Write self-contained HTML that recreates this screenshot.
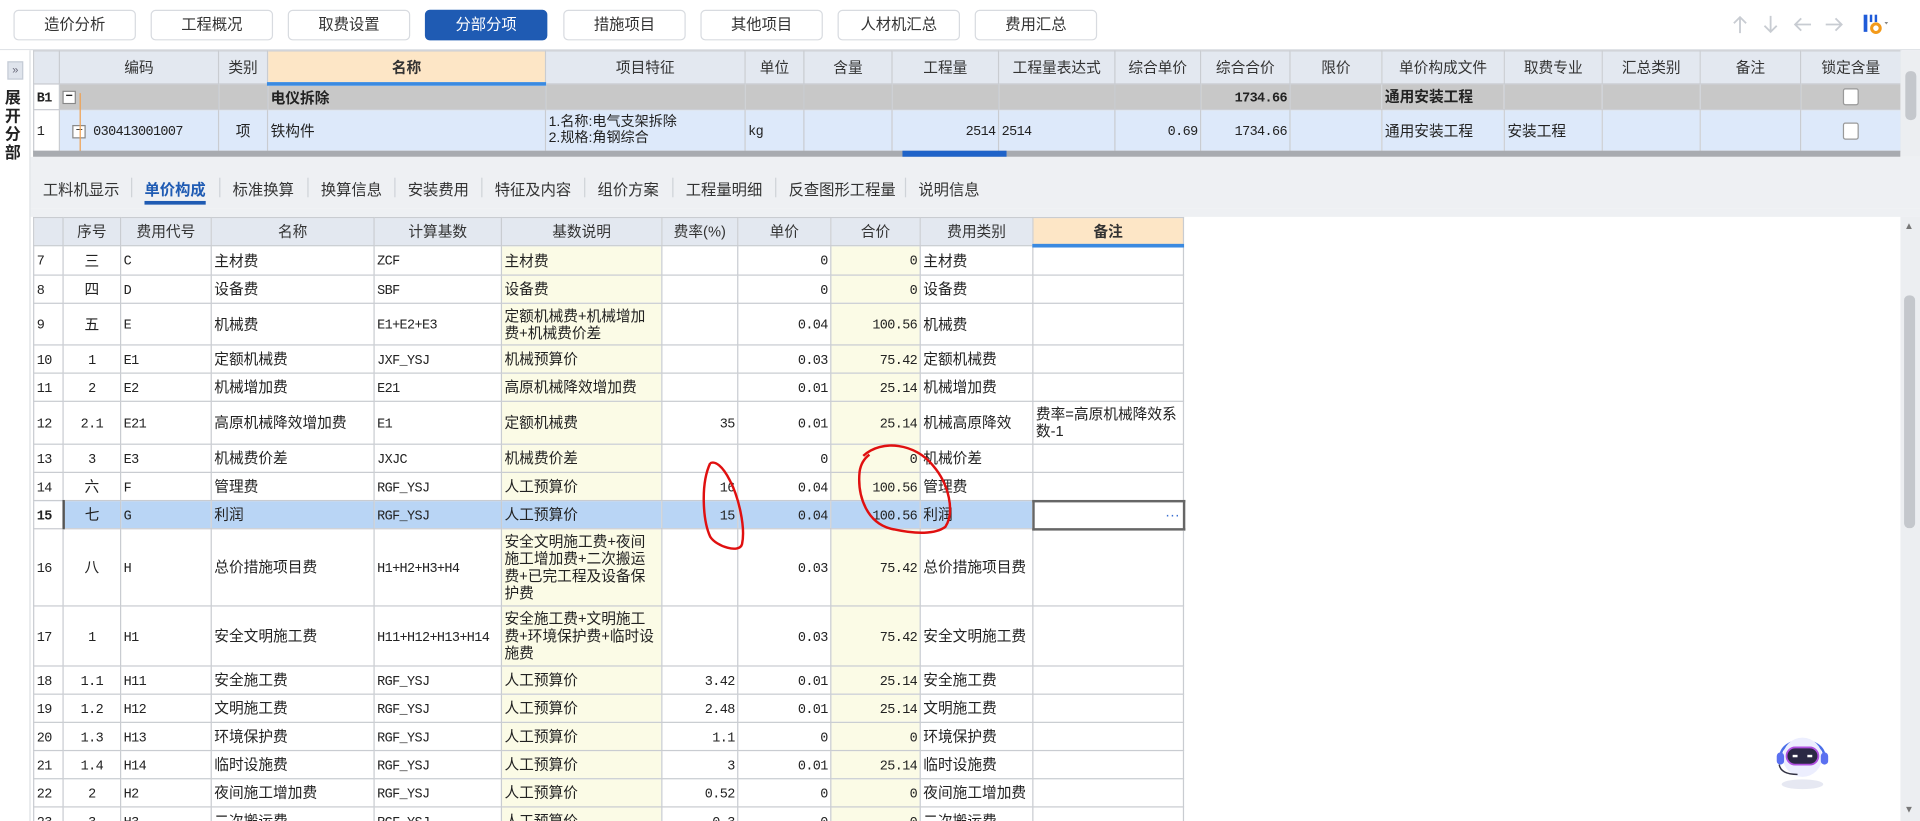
<!DOCTYPE html>
<html><head><meta charset="utf-8">
<style>
*{box-sizing:border-box;margin:0;padding:0}
html,body{width:1920px;height:821px;overflow:hidden;background:#fff}
#s{position:absolute;left:0;top:0;width:1568px;height:670px;overflow:hidden;transform:scale(1.22449,1.22537);transform-origin:0 0;font-family:"Liberation Sans","Noto Sans CJK SC",sans-serif;font-size:12px;color:#222;background:#fff}
.btn{position:absolute;top:8px;width:100px;height:25px;border:1px solid #d8dbe0;border-radius:4px;background:#fff;text-align:center;line-height:23px;font-size:12.5px;color:#333}
.btn.on{background:#1f5bb3;color:#fff;border-color:#1f5bb3}
table{border-collapse:collapse;table-layout:fixed;position:absolute}
td{border:1px solid #c9ccd1;padding:0 2px;overflow:hidden;white-space:nowrap;vertical-align:middle;line-height:14px}
.hd td{background:#e3e8f0;text-align:center;color:#333}
.r{text-align:right}.c{text-align:center}
.m{font-family:"Liberation Mono","Noto Sans CJK SC",monospace;font-size:11px;letter-spacing:-0.5px;padding-top:3px}
.y{background:#fbfbe6}
.w td.wr{white-space:normal;word-break:break-all;line-height:14px}
.cb{display:inline-block;width:13px;height:14px;border:1px solid #999;border-radius:2px;background:#fff;vertical-align:middle}
.mb{display:inline-block;width:11px;height:11px;border:1px solid #888;background:#fff;font-size:10px;line-height:8px;text-align:center;vertical-align:middle}
.tab{position:absolute;top:144px;font-size:12.5px;color:#333}
.sep{position:absolute;top:145px;width:1px;height:16px;background:#cfd3d8}
</style></head><body><div id="s">
<div class="btn" style="left:11px">造价分析</div>
<div class="btn" style="left:123px">工程概况</div>
<div class="btn" style="left:235px">取费设置</div>
<div class="btn on" style="left:347px">分部分项</div>
<div class="btn" style="left:460px">措施项目</div>
<div class="btn" style="left:572px">其他项目</div>
<div class="btn" style="left:684px">人材机汇总</div>
<div class="btn" style="left:796px">费用汇总</div>
<svg style="position:absolute;left:1412px;top:12px" width="95" height="16" fill="none" stroke="#c8ccd2" stroke-width="1.5"><path d="M9 15V2M4 7l5-5 5 5"/><path d="M34 1v13M29 9l5 5 5-5"/><path d="M67 8H54M59 3l-5 5 5 5"/><path d="M79 8h13M87 3l5 5-5 5"/></svg>
<svg style="position:absolute;left:1520px;top:11px" width="28" height="18"><rect x="2" y="1" width="3" height="14" fill="#1f5bd8"/><rect x="7" y="1" width="2" height="6" fill="#1f5bd8"/><rect x="11" y="1" width="2" height="6" fill="#1f5bd8"/><circle cx="12" cy="12" r="3.5" fill="none" stroke="#f39a1a" stroke-width="2.5"/><path d="M19 7l3 0-1.5 2z" fill="#888"/></svg>
<div style="position:absolute;left:0;top:40px;width:1568px;height:1px;background:#e0e3e7"></div>
<div style="position:absolute;left:0;top:41px;width:25px;height:629px;background:#fff;border-right:1px solid #dde0e4"></div>
<div style="position:absolute;left:6px;top:50px;width:13px;height:15px;background:#dfe4ec;border:1px solid #c5ccd6;font-size:9px;line-height:12px;text-align:center;color:#667">»</div>
<div style="position:absolute;left:4px;top:72px;width:14px;font-size:13px;font-weight:bold;line-height:15px">展开分部</div>
<table style="left:27px;top:41px;width:1525px">
<colgroup><col style="width:21px"><col style="width:130px"><col style="width:40px"><col style="width:227px"><col style="width:163px"><col style="width:48px"><col style="width:72px"><col style="width:87px"><col style="width:95px"><col style="width:70px"><col style="width:73px"><col style="width:75px"><col style="width:100px"><col style="width:80px"><col style="width:80px"><col style="width:82px"><col style="width:82px"></colgroup>
<tr class="hd" style="height:27px"><td></td><td>编码</td><td>类别</td><td style="background:#fde6c6;font-weight:bold;border-bottom:3px solid #3b8ae0">名称</td><td>项目特征</td><td>单位</td><td>含量</td><td>工程量</td><td>工程量表达式</td><td>综合单价</td><td>综合合价</td><td>限价</td><td>单价构成文件</td><td>取费专业</td><td>汇总类别</td><td>备注</td><td>锁定含量</td></tr>
<tr style="height:21px;background:#c8c8c8;font-weight:bold"><td style="background:#fff" class="m"><b>B1</b></td><td><span class="mb">−</span></td><td></td><td>电仪拆除</td><td></td><td></td><td></td><td></td><td></td><td></td><td class="r m"><b>1734.66</b></td><td></td><td>通用安装工程</td><td></td><td></td><td></td><td class="c"><span class="cb"></span></td></tr>
<tr style="height:34px;background:#dde9fa"><td style="background:#fff" class="m">1</td><td class="m" style="padding-left:10px"><span class="mb" style="font-family:Liberation Sans">−</span> 030413001007</td><td class="c">项</td><td>铁构件</td><td style="line-height:13px;font-size:11.5px">1.名称:电气支架拆除<br>2.规格:角钢综合</td><td class="m">kg</td><td></td><td class="r m">2514</td><td class="m">2514</td><td class="r m">0.69</td><td class="r m">1734.66</td><td></td><td>通用安装工程</td><td>安装工程</td><td></td><td></td><td class="c"><span class="cb"></span></td></tr>
</table>
<div style="position:absolute;left:65px;top:76px;width:1px;height:50px;background:#f0a050"></div>
<div style="position:absolute;left:27px;top:123px;width:1525px;height:5px;background:#a8abb0"></div>
<div style="position:absolute;left:737px;top:123px;width:85px;height:5px;background:#1f63c8"></div>
<div style="position:absolute;left:1552px;top:41px;width:16px;height:87px;background:#eceef1"></div>
<div style="position:absolute;left:1556px;top:58px;width:9px;height:40px;background:#c4c7cc;border-radius:4px"></div>
<div style="position:absolute;left:25px;top:128px;width:1543px;height:42px;background:#eef0f3"></div>
<div class="tab" style="left:35px">工料机显示</div><div class="sep" style="left:107px"></div>
<div class="tab" style="left:118px;color:#1f5bb3;font-weight:bold">单价构成</div><div style="position:absolute;left:118px;top:164px;width:50px;height:3px;background:#1f5bb3"></div><div class="sep" style="left:179px"></div>
<div class="tab" style="left:190px">标准换算</div><div class="sep" style="left:251px"></div>
<div class="tab" style="left:262px">换算信息</div><div class="sep" style="left:322px"></div>
<div class="tab" style="left:333px">安装费用</div><div class="sep" style="left:393px"></div>
<div class="tab" style="left:404px">特征及内容</div><div class="sep" style="left:477px"></div>
<div class="tab" style="left:488px">组价方案</div><div class="sep" style="left:549px"></div>
<div class="tab" style="left:560px">工程量明细</div><div class="sep" style="left:633px"></div>
<div class="tab" style="left:644px">反查图形工程量</div><div class="sep" style="left:739px"></div>
<div class="tab" style="left:750px">说明信息</div>
<div style="position:absolute;left:25px;top:170px;width:1543px;height:7px;background:#eef0f3"></div>
<div style="position:absolute;left:0;top:177px;width:1000px;height:493px;overflow:hidden">
<table class="w" style="left:27px;top:0;width:939px">
<colgroup><col style="width:24px"><col style="width:47px"><col style="width:74px"><col style="width:133px"><col style="width:104px"><col style="width:131px"><col style="width:62px"><col style="width:76px"><col style="width:73px"><col style="width:92px"><col style="width:123px"></colgroup>
<tr class="hd" style="height:23px"><td></td><td>序号</td><td>费用代号</td><td>名称</td><td>计算基数</td><td>基数说明</td><td>费率(%)</td><td>单价</td><td>合价</td><td>费用类别</td><td style="background:#fde6c6;font-weight:bold;border-bottom:3px solid #3b8ae0">备注</td></tr>
<tr style="height:24px"><td class="m">7</td><td class="c">三</td><td class="m">C</td><td>主材费</td><td class="m">ZCF</td><td class="y">主材费</td><td></td><td class="r m">0</td><td class="r m y">0</td><td>主材费</td><td></td></tr>
<tr style="height:23px"><td class="m">8</td><td class="c">四</td><td class="m">D</td><td>设备费</td><td class="m">SBF</td><td class="y">设备费</td><td></td><td class="r m">0</td><td class="r m y">0</td><td>设备费</td><td></td></tr>
<tr style="height:34px"><td class="m">9</td><td class="c">五</td><td class="m">E</td><td>机械费</td><td class="m">E1+E2+E3</td><td class="y wr">定额机械费+机械增加费+机械费价差</td><td></td><td class="r m">0.04</td><td class="r m y">100.56</td><td>机械费</td><td></td></tr>
<tr style="height:23px"><td class="m">10</td><td class="c m">1</td><td class="m">E1</td><td>定额机械费</td><td class="m">JXF_YSJ</td><td class="y">机械预算价</td><td></td><td class="r m">0.03</td><td class="r m y">75.42</td><td>定额机械费</td><td></td></tr>
<tr style="height:23px"><td class="m">11</td><td class="c m">2</td><td class="m">E2</td><td>机械增加费</td><td class="m">E21</td><td class="y">高原机械降效增加费</td><td></td><td class="r m">0.01</td><td class="r m y">25.14</td><td>机械增加费</td><td></td></tr>
<tr style="height:35px"><td class="m">12</td><td class="c m">2.1</td><td class="m">E21</td><td>高原机械降效增加费</td><td class="m">E1</td><td class="y">定额机械费</td><td class="r m">35</td><td class="r m">0.01</td><td class="r m y">25.14</td><td>机械高原降效</td><td class="wr">费率=高原机械降效系数-1</td></tr>
<tr style="height:23px"><td class="m">13</td><td class="c m">3</td><td class="m">E3</td><td>机械费价差</td><td class="m">JXJC</td><td class="y">机械费价差</td><td></td><td class="r m">0</td><td class="r m y">0</td><td>机械价差</td><td></td></tr>
<tr style="height:23px"><td class="m">14</td><td class="c">六</td><td class="m">F</td><td>管理费</td><td class="m">RGF_YSJ</td><td class="y">人工预算价</td><td class="r m">16</td><td class="r m">0.04</td><td class="r m y">100.56</td><td>管理费</td><td></td></tr>
<tr style="height:23px;background:#b9d5f5"><td class="m" style="background:#fff;font-weight:bold">15</td><td class="c" style="border-left:2px solid #555">七</td><td class="m">G</td><td>利润</td><td class="m">RGF_YSJ</td><td>人工预算价</td><td class="r m">15</td><td class="r m">0.04</td><td class="r m">100.56</td><td>利润</td><td class="r" style="background:#fff;color:#3b6fd0;border:2px solid #666">···</td></tr>
<tr style="height:63px"><td class="m">16</td><td class="c">八</td><td class="m">H</td><td>总价措施项目费</td><td class="m">H1+H2+H3+H4</td><td class="y wr">安全文明施工费+夜间施工增加费+二次搬运费+已完工程及设备保护费</td><td></td><td class="r m">0.03</td><td class="r m y">75.42</td><td>总价措施项目费</td><td></td></tr>
<tr style="height:49px"><td class="m">17</td><td class="c m">1</td><td class="m">H1</td><td>安全文明施工费</td><td class="m">H11+H12+H13+H14</td><td class="y wr">安全施工费+文明施工费+环境保护费+临时设施费</td><td></td><td class="r m">0.03</td><td class="r m y">75.42</td><td>安全文明施工费</td><td></td></tr>
<tr style="height:23px"><td class="m">18</td><td class="c m">1.1</td><td class="m">H11</td><td>安全施工费</td><td class="m">RGF_YSJ</td><td class="y">人工预算价</td><td class="r m">3.42</td><td class="r m">0.01</td><td class="r m y">25.14</td><td>安全施工费</td><td></td></tr>
<tr style="height:23px"><td class="m">19</td><td class="c m">1.2</td><td class="m">H12</td><td>文明施工费</td><td class="m">RGF_YSJ</td><td class="y">人工预算价</td><td class="r m">2.48</td><td class="r m">0.01</td><td class="r m y">25.14</td><td>文明施工费</td><td></td></tr>
<tr style="height:23px"><td class="m">20</td><td class="c m">1.3</td><td class="m">H13</td><td>环境保护费</td><td class="m">RGF_YSJ</td><td class="y">人工预算价</td><td class="r m">1.1</td><td class="r m">0</td><td class="r m y">0</td><td>环境保护费</td><td></td></tr>
<tr style="height:23px"><td class="m">21</td><td class="c m">1.4</td><td class="m">H14</td><td>临时设施费</td><td class="m">RGF_YSJ</td><td class="y">人工预算价</td><td class="r m">3</td><td class="r m">0.01</td><td class="r m y">25.14</td><td>临时设施费</td><td></td></tr>
<tr style="height:23px"><td class="m">22</td><td class="c m">2</td><td class="m">H2</td><td>夜间施工增加费</td><td class="m">RGF_YSJ</td><td class="y">人工预算价</td><td class="r m">0.52</td><td class="r m">0</td><td class="r m y">0</td><td>夜间施工增加费</td><td></td></tr>
<tr style="height:23px"><td class="m">23</td><td class="c m">3</td><td class="m">H3</td><td>二次搬运费</td><td class="m">RGF_YSJ</td><td class="y">人工预算价</td><td class="r m">0.3</td><td class="r m">0</td><td class="r m y">0</td><td>二次搬运费</td><td></td></tr>
</table>
</div>
<div style="position:absolute;left:1552px;top:177px;width:16px;height:493px;background:#eceef1"></div>
<div style="position:absolute;left:1555px;top:241px;width:9px;height:190px;background:#c4c7cc;border-radius:4px"></div>
<div style="position:absolute;left:1555px;top:180px;font-size:8px;color:#777">▲</div>
<div style="position:absolute;left:1555px;top:656px;font-size:8px;color:#777">▼</div>
<svg style="position:absolute;left:0;top:0" width="1568" height="670"><path d="M580 378 C572 395 574 425 580 438 C585 446 604 452 606 444 C609 430 603 405 596 392 C590 380 584 376 580 378" fill="none" stroke="#e01010" stroke-width="2"/><path d="M705 372 C720 358 748 362 762 380 C775 395 780 418 772 430 C764 436 748 436 730 432 C708 428 700 405 702 385 C703 378 706 374 710 371" fill="none" stroke="#e01010" stroke-width="2"/></svg>
<svg style="position:absolute;left:1442px;top:590px" width="60" height="58" viewBox="0 0 60 58"><ellipse cx="30" cy="50" rx="17" ry="4" fill="#e6e8f2"/><path d="M12 28 C12 10 48 10 48 28" fill="none" stroke="#4a6ee8" stroke-width="2"/><circle cx="30" cy="28" r="16" fill="#eceefe"/><rect x="17" y="20" width="26" height="14" rx="7" fill="#2a2844" stroke="#b050e0" stroke-width="1.5"/><rect x="22" y="26" width="4" height="2" fill="#fff"/><rect x="34" y="26" width="4" height="2" fill="#fff"/><rect x="9" y="24" width="6" height="10" rx="3" fill="#5a70f0"/><rect x="45" y="24" width="6" height="10" rx="3" fill="#5a70f0"/><path d="M11 34 C12 40 18 42 26 42" fill="none" stroke="#334" stroke-width="1.2"/></svg>
</div></body></html>
